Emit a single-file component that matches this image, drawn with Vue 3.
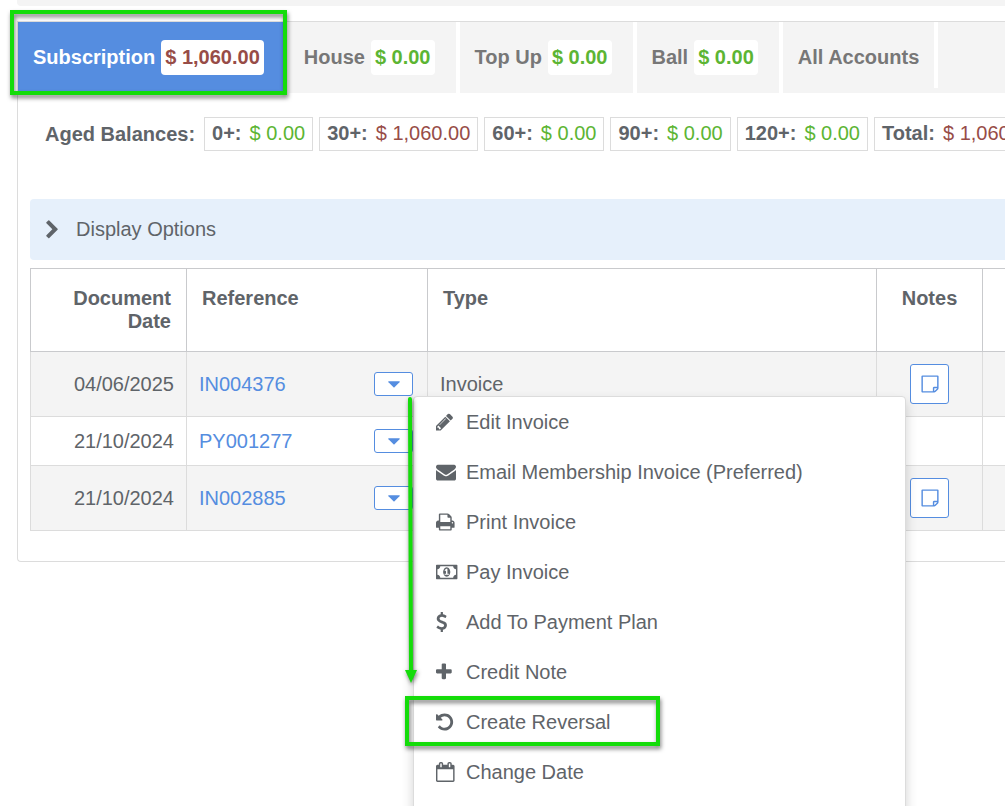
<template>
  <div class="page">
    <div class="top-strip"></div>
    <section class="panel">
      <nav class="tabs">
        <button
          v-for="tab in tabs"
          :key="tab.name"
          class="tab"
          :class="{ active: tab.name === activeTab }"
          @click="activeTab = tab.name"
        >
          <span>{{ tab.name }}</span>
          <span v-if="tab.balance" class="badge" :class="tab.owing ? 'owing' : 'clear'">{{ tab.balance }}</span>
          <span v-if="tab.highlight" class="highlight highlight-tab"></span>
        </button>
      </nav>

      <div class="aged">
        <strong class="aged-title">Aged Balances:</strong>
        <div v-for="item in aged" :key="item.label" class="aged-box">
          <strong>{{ item.label }}</strong>
          <span :class="item.owing ? 'owing' : 'clear'">{{ item.amount }}</span>
        </div>
      </div>

      <button class="display-options">
        <svg class="chevron" viewBox="345 0 1038 1792"><path :d="icons.chevron" /></svg>
        <span>Display Options</span>
      </button>

      <table class="documents">
        <colgroup>
          <col class="col-date">
          <col class="col-reference">
          <col class="col-type">
          <col class="col-notes">
          <col>
        </colgroup>
        <thead>
          <tr>
            <th class="right">Document Date</th>
            <th>Reference</th>
            <th>Type</th>
            <th class="center">Notes</th>
            <th></th>
          </tr>
        </thead>
        <tbody>
          <tr v-for="doc in documents" :key="doc.reference">
            <td class="right">{{ doc.date }}</td>
            <td>
              <div class="reference">
                <a href="#">{{ doc.reference }}</a>
                <div class="actions">
                  <button class="caret-btn" aria-label="Actions" @click="toggleMenu(doc.reference)">
                    <svg class="icon" viewBox="0 0 1792 1792"><path :d="icons.caret" /></svg>
                  </button>
                  <div v-if="openMenu === doc.reference" class="menu">
                    <button v-for="item in menuItems" :key="item.text" class="menu-item">
                      <span class="menu-icon">
                        <svg class="icon" :viewBox="item.box"><path :d="icons[item.icon]" /></svg>
                      </span>
                      <span>{{ item.text }}</span>
                      <span v-if="item.highlight" class="highlight highlight-item"></span>
                    </button>
                    <svg class="arrow" viewBox="0 0 16 292">
                      <line x1="6" y1="2" x2="7" y2="275" />
                      <path d="M1 273h12l-6 13z" />
                    </svg>
                  </div>
                </div>
              </div>
            </td>
            <td>{{ doc.type }}</td>
            <td class="center">
              <button v-if="doc.note" class="note-btn" aria-label="Notes">
                <svg class="icon" viewBox="0 0 1792 1792"><path :d="icons.note" /></svg>
              </button>
            </td>
            <td></td>
          </tr>
        </tbody>
      </table>
    </section>
  </div>
</template>

<script setup>
import { ref } from 'vue';

const activeTab = ref('Subscription');
const openMenu = ref('IN004376');

const tabs = [
  { name: 'Subscription', balance: '$ 1,060.00', owing: true, highlight: true },
  { name: 'House', balance: '$ 0.00' },
  { name: 'Top Up', balance: '$ 0.00' },
  { name: 'Ball', balance: '$ 0.00' },
  { name: 'All Accounts' }
];

const aged = [
  { label: '0+:', amount: '$ 0.00' },
  { label: '30+:', amount: '$ 1,060.00', owing: true },
  { label: '60+:', amount: '$ 0.00' },
  { label: '90+:', amount: '$ 0.00' },
  { label: '120+:', amount: '$ 0.00' },
  { label: 'Total:', amount: '$ 1,060.00', owing: true }
];

const documents = [
  { date: '04/06/2025', reference: 'IN004376', type: 'Invoice', note: true },
  { date: '21/10/2024', reference: 'PY001277', type: '', note: false },
  { date: '21/10/2024', reference: 'IN002885', type: '', note: true }
];

// each box starts at the left edge of its glyph so the icons line up
const menuItems = [
  { text: 'Edit Invoice', icon: 'pencil', box: '128 0 1792 1792' },
  { text: 'Email Membership Invoice (Preferred)', icon: 'envelope', box: '0 0 1792 1792' },
  { text: 'Print Invoice', icon: 'print', box: '64 0 1792 1792' },
  { text: 'Pay Invoice', icon: 'money', box: '0 0 1792 1792' },
  { text: 'Add To Payment Plan', icon: 'dollar', box: '384 0 1792 1792' },
  { text: 'Credit Note', icon: 'plus', box: '192 0 1792 1792' },
  { text: 'Create Reversal', icon: 'undo', box: '128 0 1792 1792', highlight: true },
  { text: 'Change Date', icon: 'calendar', box: '64 0 1792 1792' }
];

const icons = {
  chevron: 'M1363 877l-742 742q-19 19-45 19t-45-19l-166-166q-19-19-19-45t19-45l531-531-531-531q-19-19-19-45t19-45l166-166q19-19 45-19t45 19l742 742q19 19 19 45t-19 45z',
  caret: 'M1408 704q0 26-19 45l-448 448q-19 19-45 19t-45-19l-448-448q-19-19-19-45t19-45 45-19h896q26 0 45 19t19 45z',
  note: 'M1528 1280h-248v248q29-10 41-22l185-185q12-12 22-41zm-280-128h288v-896h-1280v1280h896v-288q0-40 28-68t68-28zm416-928v1024q0 40-20 88t-48 76l-184 184q-28 28-76 48t-88 20h-1024q-40 0-68-28t-28-68v-1344q0-40 28-68t68-28h1344q40 0 68 28t28 68z',
  pencil: 'M491 1536l91-91-235-235-91 91v107h128v128h107zm523-928q0-22-22-22-10 0-17 7l-542 542q-7 7-7 17 0 22 22 22 10 0 17-7l542-542q7-7 7-17zm-54-192l416 416-832 832h-416v-416zm683 96q0 53-37 90l-166 166-416-416 166-165q36-38 90-38 53 0 91 38l235 234q37 39 37 91z',
  envelope: 'M1792 710v794q0 66-47 113t-113 47h-1472q-66 0-113-47t-47-113v-794q44 49 101 87 362 246 497 345 57 42 92.5 65.5t94.5 48 110 24.5h2q51 0 110-24.5t94.5-48 92.5-65.5q170-123 498-345 57-39 100-87zm0-294q0 79-49 151t-122 123q-376 261-468 325-10 7-42.5 31t-54 38.5-52 32.5-57.5 27-50 9h-2q-23 0-50-9t-57.5-27-52-32.5-54-38.5-42.5-31q-91-64-262-182.5t-205-142.5q-62-42-117-115.5t-55-136.5q0-78 41.5-130t118.5-52h1472q65 0 112.5 47t47.5 113z',
  print: 'M448 1536h896v-256h-896v256zm0-640h896v-384h-160q-40 0-68-28t-28-68v-160h-640v640zm1152 64q0-26-19-45t-45-19-45 19-19 45 19 45 45 19 45-19 19-45zm128 0v416q0 13-9.5 22.5t-22.5 9.5h-224v160q0 40-28 68t-68 28h-960q-40 0-68-28t-28-68v-160h-224q-13 0-22.5-9.5t-9.5-22.5v-416q0-79 56.5-135.5t135.5-56.5h64v-544q0-40 28-68t68-28h672q40 0 88 20t76 48l152 152q28 28 48 76t20 88v256h64q79 0 135.5 56.5t56.5 135.5z',
  money: 'M768 1152h384v-96h-128v-448h-114l-148 137 77 80q42-37 55-57h2v288h-128v96zm512-256q0 70-21 142t-59.5 134-101.5 101-138 39-138-39-101.5-101-59.5-134-21-142 21-142 59.5-134 101.5-101 138-39 138 39 101.5 101 59.5 134 21 142zm512 256v-512q-106 0-181-75t-75-181h-1152q0 106-75 181t-181 75v512q106 0 181 75t75 181h1152q0-106 75-181t181-75zm128-832v1152q0 26-19 45t-45 19h-1792q-26 0-45-19t-19-45v-1152q0-26 19-45t45-19h1792q26 0 45 19t19 45z',
  dollar: 'M1362 1185q0 153-99.5 263.5t-258.5 136.5v175q0 14-9 23t-23 9h-135q-13 0-22.5-9.5t-9.5-22.5v-175q-66-9-127.5-31t-101.5-44.5-74-48-46.5-37.5-17.5-18q-17-21-2-41l103-135q7-10 23-12 15-2 24 9l2 2q113 99 243 125 37 8 74 8 81 0 142.5-43t61.5-122q0-28-15-53t-33.5-42-58.5-37.5-66-32-80-32.5q-39-16-61.5-25t-61.5-26.5-62.5-31-56.5-35.5-53.5-42.5-43.5-49-35.5-58-21-66.5-8.5-78q0-138 98-242t255-134v-180q0-13 9.5-22.5t22.5-9.5h135q14 0 23 9t9 23v176q57 6 110.5 23t87 33.5 63.5 37.5 39 29 15 14q17 18 5 38l-81 146q-8 15-23 16-14 3-27-7-3-3-14.5-12t-39-26.5-58.5-32-74.5-26-85.5-11.5q-95 0-155 43t-60 111q0 26 8.5 48t29.5 41.5 39.5 33 56 31 60.5 27 70 27.5q53 20 81 31.5t76 35 75.5 42.5 62 50 53 63.5 31.5 76.5 13 94z',
  plus: 'M1600 736v192q0 40-28 68t-68 28h-416v416q0 40-28 68t-68 28h-192q-40 0-68-28t-28-68v-416h-416q-40 0-68-28t-28-68v-192q0-40 28-68t68-28h416v-416q0-40 28-68t68-28h192q40 0 68 28t28 68v416h416q40 0 68 28t28 68z',
  undo: 'M1664 896q0 156-61 298t-164 245-245 164-298 61q-172 0-327-72.5t-264-204.5q-7-10-6.5-22.5t8.5-20.5l137-138q10-9 25-9 16 2 23 12 73 95 179 147t225 52q104 0 198.5-40.5t163.5-109.5 109.5-163.5 40.5-198.5-40.5-198.5-109.5-163.5-163.5-109.5-198.5-40.5q-98 0-188 35.5t-160 101.5l137 138q31 30 14 69-17 40-59 40h-448q-26 0-45-19t-19-45v-448q0-42 40-59 39-17 69 14l130 129q107-101 244.5-156.5t284.5-55.5q156 0 298 61t245 164 164 245 61 298z',
  calendar: 'M192 1664h1408v-1024h-1408v1024zm384-1216v-288q0-14-9-23t-23-9h-64q-14 0-23 9t-9 23v288q0 14 9 23t23 9h64q14 0 23-9t9-23zm768 0v-288q0-14-9-23t-23-9h-64q-14 0-23 9t-9 23v288q0 14 9 23t23 9h64q14 0 23-9t9-23zm384-64v1280q0 52-38 90t-90 38h-1408q-52 0-90-38t-38-90v-1280q0-52 38-90t90-38h128v-96q0-66 47-113t113-47h64q66 0 113 47t47 113v96h384v-96q0-66 47-113t113-47h64q66 0 113 47t47 113v96h128q52 0 90 38t38 90z'
};

const toggleMenu = (reference) => {
  openMenu.value = openMenu.value === reference ? '' : reference;
};
</script>

<style>
body {
  margin: 0;
  background-color: #ffffff;
}
</style>

<style scoped>
.page {
  min-height: 100vh;
  overflow: hidden;
  padding-left: 17px;
  box-sizing: border-box;
  font-family: "Liberation Sans", Arial, sans-serif;
  font-size: 20px;
  line-height: 23px;
  color: #5f6469;
}
button {
  font: inherit;
  color: inherit;
  border: none;
  background: none;
  padding: 0;
  cursor: pointer;
}
svg {
  display: block;
  fill: currentColor;
  overflow: visible;
}
.icon {
  width: 20px;
  height: 20px;
}
.top-strip {
  height: 6px;
  margin-bottom: 15px;
  background-color: #f4f4f4;
  border-bottom-left-radius: 4px;
}
.panel {
  border: 1px solid #dcdcdc;
  border-right: none;
  border-bottom-left-radius: 4px;
  padding-bottom: 30px;
}
.tabs {
  display: flex;
  height: 71px;
  background-color: #f4f4f4;
}
.tab {
  position: relative;
  display: flex;
  align-items: center;
  gap: 6px;
  flex-shrink: 0;
  padding: 0 15px;
  border-right: 4px solid #ffffff;
  font-weight: bold;
  color: #777777;
}
.tab:last-child {
  height: 66px;
  padding-top: 5px;
  box-sizing: border-box;
}
.tab.active {
  background-color: #558de0;
  color: #ffffff;
  z-index: 2;
}
.badge {
  padding: 6px 4px;
  margin-right: 6px;
  border-radius: 4px;
  background-color: #ffffff;
}
.owing {
  color: #974c47;
}
.clear {
  color: #5cb533;
}
.highlight {
  position: absolute;
  border: 4px solid #14dc0a;
  filter: drop-shadow(1px 3px 2px rgba(0, 0, 0, 0.5));
  pointer-events: none;
}
.highlight-tab {
  inset: -12px -2px -2px -8px;
}
.highlight-item {
  inset: -1px 245px 1px -9px;
}
.aged {
  display: flex;
  align-items: center;
  gap: 6px;
  padding: 24px 0 48px 27px;
  white-space: nowrap;
}
.aged-title {
  margin-right: 3px;
}
.aged-box {
  display: flex;
  gap: 8px;
  padding: 4px 7px 5px 7px;
  border: 1px solid #dcdcdc;
}
.display-options {
  display: flex;
  align-items: center;
  gap: 18px;
  width: calc(100% - 12px);
  height: 61px;
  margin: 0 0 8px 12px;
  padding-left: 16px;
  border-radius: 4px 0 0 4px;
  background-color: #e6f0fb;
}
.chevron {
  width: 12px;
  height: 20px;
}
.documents {
  width: calc(100% - 12px);
  margin-left: 12px;
  table-layout: fixed;
  border-collapse: collapse;
}
.col-date {
  width: 156px;
}
.col-reference {
  width: 241px;
}
.col-type {
  width: 449px;
}
.col-notes {
  width: 106px;
}
th,
td {
  border: 1px solid #dcdcdc;
  text-align: left;
}
th {
  padding: 18px 15px;
  border-color: #c9cacd;
  vertical-align: top;
}
td {
  padding: 12px;
  height: 24px;
}
th:last-child,
td:last-child {
  padding: 0;
  border-right: none;
}
tbody tr:nth-child(odd) {
  background-color: #f4f4f4;
}
.right {
  text-align: right;
}
.center {
  text-align: center;
}
a {
  color: #558de0;
  text-decoration: none;
}
.reference {
  display: flex;
  align-items: center;
  justify-content: space-between;
}
.actions {
  position: relative;
  margin-right: 2px;
}
.caret-btn,
.note-btn {
  display: flex;
  align-items: center;
  justify-content: center;
  box-sizing: border-box;
  width: 39px;
  height: 24px;
  border: 1px solid #558de0;
  border-radius: 3px;
  background-color: #ffffff;
  color: #558de0;
}
.note-btn {
  height: 40px;
  margin: 0 auto;
}
.menu {
  position: absolute;
  top: 24px;
  left: 39px;
  z-index: 10;
  box-sizing: border-box;
  width: 493px;
  padding-bottom: 50px;
  border: 1px solid #dcdcdc;
  border-radius: 4px;
  background-color: #ffffff;
  box-shadow: 0 6px 12px rgba(0, 0, 0, 0.18);
}
.menu-item {
  position: relative;
  display: flex;
  align-items: center;
  width: 100%;
  height: 50px;
  padding-left: 22px;
  white-space: nowrap;
}
.menu-icon {
  width: 30px;
}
.arrow {
  position: absolute;
  top: 0;
  left: -10px;
  width: 16px;
  height: 292px;
  fill: #14dc0a;
  filter: drop-shadow(1px 2px 2px rgba(0, 0, 0, 0.5));
  pointer-events: none;
}
.arrow line {
  stroke: #14dc0a;
  stroke-width: 4;
  stroke-linecap: round;
}
</style>
